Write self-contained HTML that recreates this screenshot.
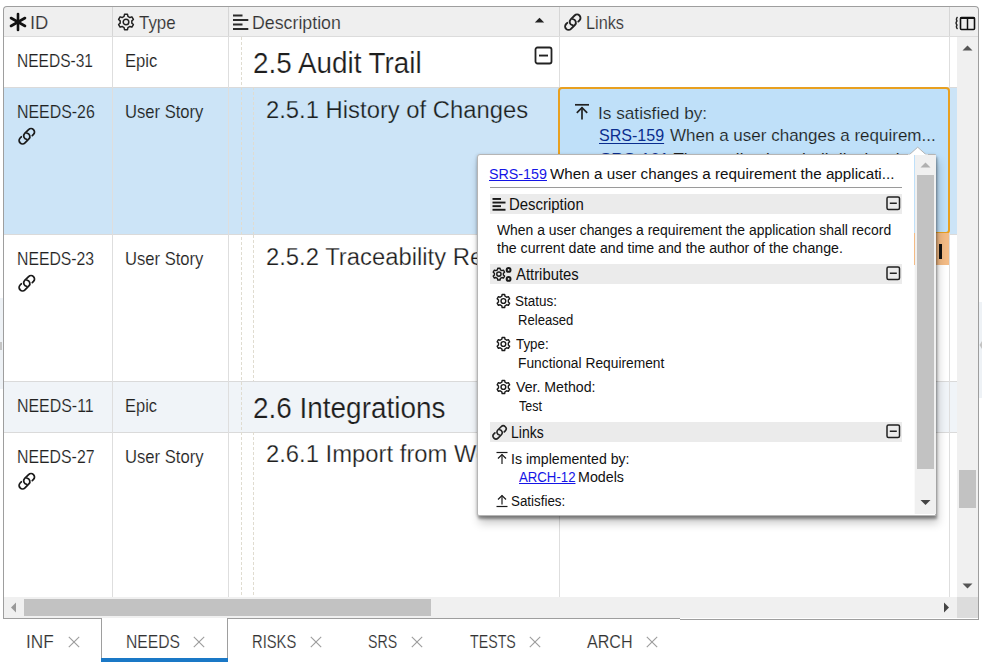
<!DOCTYPE html><html><head><meta charset="utf-8"><style>
html,body{margin:0;padding:0;width:982px;height:665px;overflow:hidden;background:#fff;font-family:"Liberation Sans", sans-serif;position:relative}
.t{position:absolute;white-space:nowrap;font-family:"Liberation Sans", sans-serif}
.dots{background-color:#efefef;background-image:radial-gradient(circle at 1px 1px,#e2e2dc 0.6px,transparent 0.9px);background-size:7px 7px}

</style></head><body>
<div style="position:absolute;left:4px;top:7px;width:974px;height:29px;background:#efefef;border-top-left-radius:3px;border-top-right-radius:3px"></div>
<div style="position:absolute;left:4px;top:36px;width:974px;height:1px;background:#dcdcdc"></div>
<div style="position:absolute;left:4px;top:37px;width:953px;height:50px;background:#ffffff"></div>
<div style="position:absolute;left:4px;top:87px;width:953px;height:148px;background:#cce4f7"></div>
<div style="position:absolute;left:4px;top:235px;width:953px;height:146px;background:#ffffff"></div>
<div style="position:absolute;left:4px;top:381px;width:953px;height:51px;background:#f0f4f8"></div>
<div style="position:absolute;left:4px;top:432px;width:953px;height:165px;background:#ffffff"></div>
<div style="position:absolute;left:4px;top:87px;width:953px;height:1px;background:#dadada"></div>
<div style="position:absolute;left:4px;top:234px;width:953px;height:1px;background:#dadada"></div>
<div style="position:absolute;left:4px;top:381px;width:953px;height:1px;background:#dadada"></div>
<div style="position:absolute;left:4px;top:432px;width:953px;height:1px;background:#dadada"></div>
<div style="position:absolute;left:112px;top:7px;width:1px;height:29px;background:#d6d6d6"></div>
<div style="position:absolute;left:112px;top:37px;width:1px;height:560px;background:#dedede"></div>
<div style="position:absolute;left:228px;top:7px;width:1px;height:29px;background:#d6d6d6"></div>
<div style="position:absolute;left:228px;top:37px;width:1px;height:560px;background:#dedede"></div>
<div style="position:absolute;left:559px;top:7px;width:1px;height:29px;background:#d6d6d6"></div>
<div style="position:absolute;left:559px;top:37px;width:1px;height:560px;background:#dedede"></div>
<div style="position:absolute;left:949px;top:7px;width:1px;height:29px;background:#d6d6d6"></div>
<div style="position:absolute;left:949px;top:37px;width:1px;height:560px;background:#dedede"></div>
<div style="position:absolute;left:241px;top:37px;width:1px;height:560px;background-image:linear-gradient(#e0dcd0 60%,transparent 60%);background-size:1px 5px"></div>
<div style="position:absolute;left:253px;top:87px;width:1px;height:147px;background-image:linear-gradient(#e0dcd0 60%,transparent 60%);background-size:1px 5px"></div>
<div style="position:absolute;left:253px;top:235px;width:1px;height:146px;background-image:linear-gradient(#e0dcd0 60%,transparent 60%);background-size:1px 5px"></div>
<div style="position:absolute;left:253px;top:432px;width:1px;height:165px;background-image:linear-gradient(#e0dcd0 60%,transparent 60%);background-size:1px 5px"></div>
<svg style="position:absolute;left:8px;top:12px;" width="20" height="20" viewBox="0 0 20 20"><g stroke="#111" stroke-width="2.6" stroke-linecap="round"><line x1="10" y1="2" x2="10" y2="18"/><line x1="3" y1="6" x2="17" y2="14"/><line x1="3" y1="14" x2="17" y2="6"/></g></svg>
<div class="t" style="left:30.25px;top:15px;font-size:17.83px;line-height:17.83px;color:#333;transform:scaleX(1.0327);transform-origin:0 0;;-webkit-text-stroke:0.15px #efefef">ID</div>
<svg style="position:absolute;left:116px;top:12px;" width="20" height="20" viewBox="0 0 20 20"><path d="M8.07,4.39 L8.51,2.34 L11.49,2.34 L11.93,4.39 L13.89,5.53 L15.89,4.88 L17.38,7.46 L15.82,8.87 L15.82,11.13 L17.38,12.54 L15.89,15.12 L13.89,14.47 L11.93,15.61 L11.49,17.66 L8.51,17.66 L8.07,15.61 L6.11,14.47 L4.11,15.12 L2.62,12.54 L4.18,11.13 L4.18,8.87 L2.62,7.46 L4.11,4.88 L6.11,5.53Z" fill="none" stroke="#222" stroke-width="1.5" stroke-linejoin="round"/><circle cx="10" cy="10" r="2.81" fill="none" stroke="#222" stroke-width="1.5"/></svg>
<div class="t" style="left:138.90px;top:15px;font-size:17.83px;line-height:17.83px;color:#333;transform:scaleX(0.9470);transform-origin:0 0;;-webkit-text-stroke:0.15px #efefef">Type</div>
<svg style="position:absolute;left:232px;top:13px;" width="18" height="18" viewBox="0 0 18 18"><g fill="#2a2a2a"><rect x="1" y="1.5" width="9.5" height="2"/><rect x="1" y="6" width="15.3" height="2"/><rect x="1" y="10.5" width="9.5" height="2"/><rect x="1" y="15" width="15.3" height="2"/></g></svg>
<div class="t" style="left:251.80px;top:15px;font-size:17.83px;line-height:17.83px;color:#333;transform:scaleX(0.9967);transform-origin:0 0;;-webkit-text-stroke:0.15px #efefef">Description</div>
<svg style="position:absolute;left:534px;top:17px;" width="11" height="6" viewBox="0 0 11 6"><path d="M0.8,5.5 L5.5,0.8 L10.2,5.5Z" fill="#222"/></svg>
<svg style="position:absolute;left:564px;top:13px;" width="18" height="18" viewBox="0 0 18 18"><g transform="translate(8.8 9.2) scale(1.0) rotate(-45)" fill="none" stroke="#222" stroke-width="1.90" stroke-linecap="round"><path d="M-4.3,-3.45 L-6.0,-3.45 A3.45,3.45 0 0 0 -6.0,3.45 L-0.5,3.45 A3.45,3.45 0 0 0 2.25,-2.08"/><path d="M4.3,3.45 L6.0,3.45 A3.45,3.45 0 0 0 6.0,-3.45 L0.5,-3.45 A3.45,3.45 0 0 0 -2.25,2.08"/></g></svg>
<div class="t" style="left:586.00px;top:15px;font-size:17.83px;line-height:17.83px;color:#333;transform:scaleX(0.9126);transform-origin:0 0;;-webkit-text-stroke:0.15px #efefef">Links</div>
<svg style="position:absolute;left:953px;top:14px;" width="24" height="18" viewBox="0 0 24 18"><path d="M4.5,3 Q2.5,5 4,7 Q2,9 4,11 Q2.5,13 4.5,15" fill="none" stroke="#222" stroke-width="1.3"/><rect x="7.5" y="3.5" width="14" height="12" rx="1" fill="none" stroke="#111" stroke-width="1.6"/><rect x="7.5" y="3" width="14" height="2" fill="#111"/><line x1="14.5" y1="4" x2="14.5" y2="15" stroke="#111" stroke-width="1.5"/></svg>
<div class="t" style="left:17.40px;top:53px;font-size:17.97px;line-height:17.97px;color:#222;transform:scaleX(0.8652);transform-origin:0 0;;-webkit-text-stroke:0.15px #ffffff">NEEDS-31</div>
<div class="t" style="left:125.10px;top:53px;font-size:17.97px;line-height:17.97px;color:#222;transform:scaleX(0.9276);transform-origin:0 0;;-webkit-text-stroke:0.15px #ffffff">Epic</div>
<div class="t" style="left:253.40px;top:49px;font-size:28.99px;line-height:28.99px;color:#1e1e1e;transform:scaleX(0.9607);transform-origin:0 0;-webkit-text-stroke:0.2px #ffffff">2.5 Audit Trail</div>
<svg style="position:absolute;left:534px;top:46px;" width="20" height="20" viewBox="0 0 20 20"><rect x="1.5" y="1.5" width="16" height="16" rx="2" fill="none" stroke="#222" stroke-width="1.8"/><rect x="5" y="8.6" width="9" height="1.9" fill="#222"/></svg>
<div class="t" style="left:17.30px;top:104px;font-size:17.97px;line-height:17.97px;color:#222;transform:scaleX(0.8861);transform-origin:0 0;;-webkit-text-stroke:0.15px #cce4f7">NEEDS-26</div>
<svg style="position:absolute;left:17.5px;top:127px;" width="18" height="18" viewBox="0 0 18 18"><g transform="translate(8.8 9.2) scale(1.0) rotate(-45)" fill="none" stroke="#1a1a1a" stroke-width="1.75" stroke-linecap="round"><path d="M-4.3,-3.45 L-6.0,-3.45 A3.45,3.45 0 0 0 -6.0,3.45 L-0.5,3.45 A3.45,3.45 0 0 0 2.25,-2.08"/><path d="M4.3,3.45 L6.0,3.45 A3.45,3.45 0 0 0 6.0,-3.45 L0.5,-3.45 A3.45,3.45 0 0 0 -2.25,2.08"/></g></svg>
<div class="t" style="left:125.30px;top:104px;font-size:17.97px;line-height:17.97px;color:#222;transform:scaleX(0.9248);transform-origin:0 0;;-webkit-text-stroke:0.15px #cce4f7">User Story</div>
<div class="t" style="left:266.35px;top:98px;font-size:24.35px;line-height:24.35px;color:#1e1e1e;transform:scaleX(0.9788);transform-origin:0 0;-webkit-text-stroke:0.25px #cce4f7">2.5.1 History of Changes</div>
<div class="t" style="left:17.40px;top:251px;font-size:17.97px;line-height:17.97px;color:#222;transform:scaleX(0.8785);transform-origin:0 0;;-webkit-text-stroke:0.15px #ffffff">NEEDS-23</div>
<svg style="position:absolute;left:17.5px;top:274px;" width="18" height="18" viewBox="0 0 18 18"><g transform="translate(8.8 9.2) scale(1.0) rotate(-45)" fill="none" stroke="#1a1a1a" stroke-width="1.75" stroke-linecap="round"><path d="M-4.3,-3.45 L-6.0,-3.45 A3.45,3.45 0 0 0 -6.0,3.45 L-0.5,3.45 A3.45,3.45 0 0 0 2.25,-2.08"/><path d="M4.3,3.45 L6.0,3.45 A3.45,3.45 0 0 0 6.0,-3.45 L0.5,-3.45 A3.45,3.45 0 0 0 -2.25,2.08"/></g></svg>
<div class="t" style="left:125.30px;top:251px;font-size:17.97px;line-height:17.97px;color:#222;transform:scaleX(0.9248);transform-origin:0 0;;-webkit-text-stroke:0.15px #ffffff">User Story</div>
<div class="t" style="left:266.30px;top:245px;font-size:24.35px;line-height:24.35px;color:#1e1e1e;transform:scaleX(0.9788);transform-origin:0 0;-webkit-text-stroke:0.25px #ffffff">2.5.2 Traceability Requirements</div>
<div class="t" style="left:17.30px;top:398px;font-size:17.97px;line-height:17.97px;color:#222;transform:scaleX(0.8864);transform-origin:0 0;;-webkit-text-stroke:0.15px #f0f4f8">NEEDS-11</div>
<div class="t" style="left:125.15px;top:398px;font-size:17.97px;line-height:17.97px;color:#222;transform:scaleX(0.9173);transform-origin:0 0;;-webkit-text-stroke:0.15px #f0f4f8">Epic</div>
<div class="t" style="left:253.20px;top:394px;font-size:28.99px;line-height:28.99px;color:#1e1e1e;transform:scaleX(0.9630);transform-origin:0 0;-webkit-text-stroke:0.2px #f0f4f8">2.6 Integrations</div>
<div class="t" style="left:17.25px;top:449px;font-size:17.97px;line-height:17.97px;color:#222;transform:scaleX(0.8831);transform-origin:0 0;;-webkit-text-stroke:0.15px #ffffff">NEEDS-27</div>
<svg style="position:absolute;left:17.5px;top:472px;" width="18" height="18" viewBox="0 0 18 18"><g transform="translate(8.8 9.2) scale(1.0) rotate(-45)" fill="none" stroke="#1a1a1a" stroke-width="1.75" stroke-linecap="round"><path d="M-4.3,-3.45 L-6.0,-3.45 A3.45,3.45 0 0 0 -6.0,3.45 L-0.5,3.45 A3.45,3.45 0 0 0 2.25,-2.08"/><path d="M4.3,3.45 L6.0,3.45 A3.45,3.45 0 0 0 6.0,-3.45 L0.5,-3.45 A3.45,3.45 0 0 0 -2.25,2.08"/></g></svg>
<div class="t" style="left:125.30px;top:449px;font-size:17.97px;line-height:17.97px;color:#222;transform:scaleX(0.9260);transform-origin:0 0;;-webkit-text-stroke:0.15px #ffffff">User Story</div>
<div class="t" style="left:266.30px;top:442px;font-size:24.35px;line-height:24.35px;color:#1e1e1e;transform:scaleX(0.9788);transform-origin:0 0;-webkit-text-stroke:0.25px #ffffff">2.6.1 Import from Word</div>
<div style="position:absolute;left:558px;top:87px;width:388px;height:143px;border:2px solid #e8a020;border-radius:4px;background:#bfe0f9"></div>
<svg style="position:absolute;left:573px;top:103px;" width="18" height="18" viewBox="0 0 18 18"><g fill="none" stroke="#222" stroke-width="1.7"><line x1="2" y1="1.8" x2="16" y2="1.8"/><line x1="9" y1="4.5" x2="9" y2="16.5"/><path d="M3.8,9.8 L9,4.6 L14.2,9.8"/></g></svg>
<div class="t" style="left:598.35px;top:105px;font-size:17.39px;line-height:17.39px;color:#1e1e1e;transform:scaleX(0.9912);transform-origin:0 0;;-webkit-text-stroke:0.15px #bfe0f9">Is satisfied by:</div>
<div class="t" style="left:599.35px;top:127px;font-size:17.39px;line-height:17.39px;color:#0a2d8f;transform:scaleX(0.9233);transform-origin:0 0;"><span style="text-decoration:underline;text-underline-offset:2px">SRS-159</span></div>
<div class="t" style="left:670.20px;top:127px;font-size:17.39px;line-height:17.39px;color:#1e1e1e;transform:scaleX(0.9790);transform-origin:0 0;;-webkit-text-stroke:0.15px #bfe0f9">When a user changes a requirem...</div>
<div class="t" style="left:599.90px;top:151px;font-size:17.39px;line-height:17.39px;color:#1e1e1e;transform:scaleX(0.9790);transform-origin:0 0;width:340px;overflow:hidden"><span style="color:#0a2d8f;text-decoration:underline;text-underline-offset:2px;-webkit-text-stroke:0">SRS-161</span> The application shall display the a...</div>
<div style="position:absolute;left:559px;top:233px;width:390px;height:32px;background:#f3bb85"></div>
<div style="position:absolute;left:939px;top:244px;width:3px;height:15px;background:#111"></div>
<div style="position:absolute;left:957px;top:37px;width:21px;height:560px;background:#f0f0f0"></div>
<svg style="position:absolute;left:957px;top:40px;" width="21" height="14" viewBox="0 0 21 14"><path d="M5.5,10.5 L10.5,5.5 L15.5,10.5Z" fill="#555"/></svg>
<div style="position:absolute;left:959px;top:470px;width:17px;height:38px;background:#c2c2c2"></div>
<svg style="position:absolute;left:957px;top:580px;" width="21" height="14" viewBox="0 0 21 14"><path d="M5.5,3.5 L10.5,8.5 L15.5,3.5Z" fill="#555"/></svg>
<div style="position:absolute;left:4px;top:597px;width:953px;height:21px;background:#f0f0f0"></div>
<svg style="position:absolute;left:4px;top:597px;" width="20" height="21" viewBox="0 0 20 21"><path d="M12,5.5 L7,10.5 L12,15.5Z" fill="#999"/></svg>
<div style="position:absolute;left:24px;top:599px;width:407px;height:17px;background:#c2c2c2"></div>
<svg style="position:absolute;left:936px;top:597px;" width="20" height="21" viewBox="0 0 20 21"><path d="M8,5.5 L13,10.5 L8,15.5Z" fill="#444"/></svg>
<div style="position:absolute;left:957px;top:597px;width:21px;height:21px;background:#dcdcdc"></div>
<div style="position:absolute;left:0px;top:298px;width:3px;height:91px;background:#eef2f6"></div>
<div style="position:absolute;left:0px;top:342px;width:2px;height:8px;background:#c4c4c4"></div>
<div style="position:absolute;left:979px;top:302px;width:3px;height:96px;background:#eef2f6"></div>
<svg style="position:absolute;left:979px;top:340px;" width="3" height="10" viewBox="0 0 3 10"><path d="M3,1 L0.5,5 L3,9Z" fill="#c4c4c4"/></svg>
<div style="position:absolute;left:3px;top:6px;width:974px;height:612px;border:1px solid #9e9e9e;border-bottom:none;border-radius:4px 4px 0 0;pointer-events:none"></div>
<div style="position:absolute;left:3px;top:618px;width:98px;height:1px;background:#9e9e9e"></div>
<div style="position:absolute;left:228px;top:618px;width:452px;height:1px;background:#9e9e9e"></div>
<div style="position:absolute;left:680px;top:619px;width:299px;height:1px;background:#9e9e9e"></div>
<div style="position:absolute;left:978px;top:618px;width:1px;height:2px;background:#9e9e9e"></div>
<div style="position:absolute;left:102px;top:618px;width:125px;height:44px;background:#fff"></div>
<div style="position:absolute;left:101px;top:618px;width:1px;height:40px;background:#9e9e9e"></div>
<div style="position:absolute;left:227px;top:618px;width:1px;height:40px;background:#9e9e9e"></div>
<div style="position:absolute;left:101px;top:658px;width:127px;height:4px;background:#1a78c6"></div>
<div class="t" style="left:26.05px;top:634px;font-size:17.97px;line-height:17.97px;color:#333;transform:scaleX(0.9586);transform-origin:0 0;;-webkit-text-stroke:0.15px #ffffff">INF</div>
<svg style="position:absolute;left:67.5px;top:636px;" width="12" height="12" viewBox="0 0 12 12"><g stroke="#9c9c9c" stroke-width="1.1"><line x1="0.8" y1="0.8" x2="11.2" y2="11.2"/><line x1="11.2" y1="0.8" x2="0.8" y2="11.2"/></g></svg>
<div class="t" style="left:126.30px;top:634px;font-size:17.97px;line-height:17.97px;color:#333;transform:scaleX(0.8742);transform-origin:0 0;;-webkit-text-stroke:0.15px #ffffff">NEEDS</div>
<svg style="position:absolute;left:192.5px;top:636px;" width="12" height="12" viewBox="0 0 12 12"><g stroke="#9c9c9c" stroke-width="1.1"><line x1="0.8" y1="0.8" x2="11.2" y2="11.2"/><line x1="11.2" y1="0.8" x2="0.8" y2="11.2"/></g></svg>
<div class="t" style="left:252.35px;top:634px;font-size:17.97px;line-height:17.97px;color:#333;transform:scaleX(0.8214);transform-origin:0 0;;-webkit-text-stroke:0.15px #ffffff">RISKS</div>
<svg style="position:absolute;left:309.5px;top:636px;" width="12" height="12" viewBox="0 0 12 12"><g stroke="#9c9c9c" stroke-width="1.1"><line x1="0.8" y1="0.8" x2="11.2" y2="11.2"/><line x1="11.2" y1="0.8" x2="0.8" y2="11.2"/></g></svg>
<div class="t" style="left:368.30px;top:634px;font-size:17.97px;line-height:17.97px;color:#333;transform:scaleX(0.7905);transform-origin:0 0;;-webkit-text-stroke:0.15px #ffffff">SRS</div>
<svg style="position:absolute;left:411.2px;top:636px;" width="12" height="12" viewBox="0 0 12 12"><g stroke="#9c9c9c" stroke-width="1.1"><line x1="0.8" y1="0.8" x2="11.2" y2="11.2"/><line x1="11.2" y1="0.8" x2="0.8" y2="11.2"/></g></svg>
<div class="t" style="left:469.80px;top:634px;font-size:17.97px;line-height:17.97px;color:#333;transform:scaleX(0.7927);transform-origin:0 0;;-webkit-text-stroke:0.15px #ffffff">TESTS</div>
<svg style="position:absolute;left:528.7px;top:636px;" width="12" height="12" viewBox="0 0 12 12"><g stroke="#9c9c9c" stroke-width="1.1"><line x1="0.8" y1="0.8" x2="11.2" y2="11.2"/><line x1="11.2" y1="0.8" x2="0.8" y2="11.2"/></g></svg>
<div class="t" style="left:587.45px;top:634px;font-size:17.97px;line-height:17.97px;color:#333;transform:scaleX(0.8971);transform-origin:0 0;;-webkit-text-stroke:0.15px #ffffff">ARCH</div>
<svg style="position:absolute;left:645.5px;top:636px;" width="12" height="12" viewBox="0 0 12 12"><g stroke="#9c9c9c" stroke-width="1.1"><line x1="0.8" y1="0.8" x2="11.2" y2="11.2"/><line x1="11.2" y1="0.8" x2="0.8" y2="11.2"/></g></svg>
<div style="position:absolute;left:477px;top:154px;width:459px;height:362px;background:#fff;border:1px solid #b5b5b5;border-radius:3px 0 0 2px;box-sizing:border-box;box-shadow:1px 3px 3px rgba(0,0,0,0.38), 2px 7px 10px rgba(0,0,0,0.22), -1px 0 3px rgba(0,0,0,0.1)"></div>
<svg style="position:absolute;left:908px;top:146px;" width="20" height="10" viewBox="0 0 20 10"><path d="M1,9 L9.7,1.2 L18.4,9" fill="#fff" stroke="#b5b5b5" stroke-width="1"/><rect x="0" y="8.5" width="20" height="2" fill="#fff"/></svg>
<div class="t" style="left:489.10px;top:166px;font-size:15.22px;line-height:15.22px;color:#1515e6;transform:scaleX(0.9385);transform-origin:0 0;"><span style="text-decoration:underline">SRS-159</span></div>
<div class="t" style="left:550.35px;top:166px;font-size:15.22px;line-height:15.22px;color:#111;transform:scaleX(1.0004);transform-origin:0 0;">When a user changes a requirement the applicati...</div>
<div style="position:absolute;left:490px;top:187px;width:412px;height:1px;background:#9a9a9a"></div>
<div style="position:absolute;left:490px;top:194px;width:412px;height:20px;background:#ebebeb"></div>
<svg style="position:absolute;left:491px;top:197px;" width="16" height="14" viewBox="0 0 16 14"><g fill="#1a1a1a"><rect x="1.5" y="1" width="8.5" height="1.9"/><rect x="1.5" y="4.6" width="13" height="1.9"/><rect x="1.5" y="8.2" width="8.5" height="1.9"/><rect x="1.5" y="11.8" width="13" height="1.9"/></g></svg>
<div class="t" style="left:509.20px;top:197px;font-size:15.65px;line-height:15.65px;color:#111;transform:scaleX(0.9546);transform-origin:0 0;">Description</div>
<svg style="position:absolute;left:886px;top:196px;" width="15" height="15" viewBox="0 0 15 15"><rect x="1" y="1" width="12.5" height="12.5" rx="1.5" fill="none" stroke="#222" stroke-width="1.5"/><rect x="3.8" y="6.5" width="7" height="1.5" fill="#222"/></svg>
<div class="t" style="left:497.00px;top:224px;font-size:13.77px;line-height:13.77px;color:#111;transform:scaleX(1.0100);transform-origin:0 0;">When a user changes a requirement the application shall record</div>
<div class="t" style="left:497.00px;top:242px;font-size:13.77px;line-height:13.77px;color:#111;transform:scaleX(1.0271);transform-origin:0 0;">the current date and time and the author of the change.</div>
<div style="position:absolute;left:490px;top:264px;width:412px;height:20px;background:#ebebeb"></div>
<svg style="position:absolute;left:491px;top:266px;" width="22" height="16" viewBox="0 0 22 16"><path d="M6.42,3.79 L6.76,2.21 L9.04,2.21 L9.38,3.79 L10.89,4.66 L12.43,4.16 L13.57,6.15 L12.38,7.23 L12.38,8.97 L13.57,10.05 L12.43,12.04 L10.89,11.54 L9.38,12.41 L9.04,13.99 L6.76,13.99 L6.42,12.41 L4.91,11.54 L3.37,12.04 L2.23,10.05 L3.42,8.97 L3.42,7.23 L2.23,6.15 L3.37,4.16 L4.91,4.66Z" fill="none" stroke="#1a1a1a" stroke-width="1.4" stroke-linejoin="round"/><circle cx="7.9" cy="8.1" r="2.16" fill="none" stroke="#1a1a1a" stroke-width="1.4"/><g fill="none" stroke="#1a1a1a"><circle cx="17.6" cy="3.9" r="1.9" stroke-width="2.0"/><circle cx="17.6" cy="12.9" r="1.9" stroke-width="2.0"/></g></svg>
<div class="t" style="left:516.05px;top:267px;font-size:15.65px;line-height:15.65px;color:#111;transform:scaleX(0.9501);transform-origin:0 0;">Attributes</div>
<svg style="position:absolute;left:886px;top:266px;" width="15" height="15" viewBox="0 0 15 15"><rect x="1" y="1" width="12.5" height="12.5" rx="1.5" fill="none" stroke="#222" stroke-width="1.5"/><rect x="3.8" y="6.5" width="7" height="1.5" fill="#222"/></svg>
<svg style="position:absolute;left:495px;top:293.3px;" width="16" height="16" viewBox="0 0 16 16"><path d="M6.77,3.26 L7.14,1.52 L9.66,1.52 L10.03,3.26 L11.69,4.21 L13.38,3.67 L14.64,5.85 L13.32,7.04 L13.32,8.96 L14.64,10.15 L13.38,12.33 L11.69,11.79 L10.03,12.74 L9.66,14.48 L7.14,14.48 L6.77,12.74 L5.11,11.79 L3.42,12.33 L2.16,10.15 L3.48,8.96 L3.48,7.04 L2.16,5.85 L3.42,3.67 L5.11,4.21Z" fill="none" stroke="#1a1a1a" stroke-width="1.4" stroke-linejoin="round"/><circle cx="8.4" cy="8.0" r="2.38" fill="none" stroke="#1a1a1a" stroke-width="1.4"/></svg>
<div class="t" style="left:515.00px;top:294px;font-size:14.64px;line-height:14.64px;color:#111;transform:scaleX(0.9211);transform-origin:0 0;">Status:</div>
<div class="t" style="left:518.35px;top:313px;font-size:14.64px;line-height:14.64px;color:#111;transform:scaleX(0.8943);transform-origin:0 0;">Released</div>
<svg style="position:absolute;left:495px;top:336.0px;" width="16" height="16" viewBox="0 0 16 16"><path d="M6.77,3.26 L7.14,1.52 L9.66,1.52 L10.03,3.26 L11.69,4.21 L13.38,3.67 L14.64,5.85 L13.32,7.04 L13.32,8.96 L14.64,10.15 L13.38,12.33 L11.69,11.79 L10.03,12.74 L9.66,14.48 L7.14,14.48 L6.77,12.74 L5.11,11.79 L3.42,12.33 L2.16,10.15 L3.48,8.96 L3.48,7.04 L2.16,5.85 L3.42,3.67 L5.11,4.21Z" fill="none" stroke="#1a1a1a" stroke-width="1.4" stroke-linejoin="round"/><circle cx="8.4" cy="8.0" r="2.38" fill="none" stroke="#1a1a1a" stroke-width="1.4"/></svg>
<div class="t" style="left:516.00px;top:337px;font-size:14.64px;line-height:14.64px;color:#111;transform:scaleX(0.9143);transform-origin:0 0;">Type:</div>
<div class="t" style="left:518.35px;top:356px;font-size:14.64px;line-height:14.64px;color:#111;transform:scaleX(0.9426);transform-origin:0 0;">Functional Requirement</div>
<svg style="position:absolute;left:495px;top:378.7px;" width="16" height="16" viewBox="0 0 16 16"><path d="M6.77,3.26 L7.14,1.52 L9.66,1.52 L10.03,3.26 L11.69,4.21 L13.38,3.67 L14.64,5.85 L13.32,7.04 L13.32,8.96 L14.64,10.15 L13.38,12.33 L11.69,11.79 L10.03,12.74 L9.66,14.48 L7.14,14.48 L6.77,12.74 L5.11,11.79 L3.42,12.33 L2.16,10.15 L3.48,8.96 L3.48,7.04 L2.16,5.85 L3.42,3.67 L5.11,4.21Z" fill="none" stroke="#1a1a1a" stroke-width="1.4" stroke-linejoin="round"/><circle cx="8.4" cy="8.0" r="2.38" fill="none" stroke="#1a1a1a" stroke-width="1.4"/></svg>
<div class="t" style="left:516.00px;top:380px;font-size:14.64px;line-height:14.64px;color:#111;transform:scaleX(0.9674);transform-origin:0 0;">Ver. Method:</div>
<div class="t" style="left:519.35px;top:399px;font-size:14.64px;line-height:14.64px;color:#111;transform:scaleX(0.8543);transform-origin:0 0;">Test</div>
<div style="position:absolute;left:490px;top:422px;width:412px;height:20px;background:#ebebeb"></div>
<svg style="position:absolute;left:492px;top:424px;" width="17" height="17" viewBox="0 0 17 17"><g transform="translate(7.6 8.4) scale(0.85) rotate(-45)" fill="none" stroke="#222" stroke-width="1.88" stroke-linecap="round"><path d="M-4.3,-3.45 L-6.0,-3.45 A3.45,3.45 0 0 0 -6.0,3.45 L-0.5,3.45 A3.45,3.45 0 0 0 2.25,-2.08"/><path d="M4.3,3.45 L6.0,3.45 A3.45,3.45 0 0 0 6.0,-3.45 L0.5,-3.45 A3.45,3.45 0 0 0 -2.25,2.08"/></g></svg>
<div class="t" style="left:511.00px;top:425px;font-size:15.65px;line-height:15.65px;color:#111;transform:scaleX(0.8948);transform-origin:0 0;">Links</div>
<svg style="position:absolute;left:886px;top:424px;" width="15" height="15" viewBox="0 0 15 15"><rect x="1" y="1" width="12.5" height="12.5" rx="1.5" fill="none" stroke="#222" stroke-width="1.5"/><rect x="3.8" y="6.5" width="7" height="1.5" fill="#222"/></svg>
<svg style="position:absolute;left:495px;top:451px;" width="14" height="14" viewBox="0 0 14 14"><g fill="none" stroke="#1a1a1a" stroke-width="1.2"><line x1="1.5" y1="1.5" x2="12.5" y2="1.5"/><line x1="7" y1="3.5" x2="7" y2="13"/><path d="M3,7.5 L7,3.5 L11,7.5"/></g></svg>
<div class="t" style="left:511.25px;top:453px;font-size:13.91px;line-height:13.91px;color:#111;transform:scaleX(1.0154);transform-origin:0 0;">Is implemented by:</div>
<div class="t" style="left:519.10px;top:471px;font-size:13.91px;line-height:13.91px;color:#1515e6;transform:scaleX(0.9492);transform-origin:0 0;"><span style="text-decoration:underline">ARCH-12</span></div>
<div class="t" style="left:578.35px;top:471px;font-size:13.91px;line-height:13.91px;color:#111;transform:scaleX(1.0258);transform-origin:0 0;">Models</div>
<svg style="position:absolute;left:495px;top:494px;" width="14" height="14" viewBox="0 0 14 14"><g fill="none" stroke="#1a1a1a" stroke-width="1.2"><line x1="1.5" y1="12.5" x2="12.5" y2="12.5"/><line x1="7" y1="1.5" x2="7" y2="10.5"/><path d="M3,5.5 L7,1.5 L11,5.5"/></g></svg>
<div class="t" style="left:511.25px;top:495px;font-size:13.91px;line-height:13.91px;color:#111;transform:scaleX(0.9619);transform-origin:0 0;">Satisfies:</div>
<div style="position:absolute;left:914px;top:155px;width:1px;height:78px;background:#bfe0f9"></div>
<div style="position:absolute;left:914px;top:233px;width:1px;height:32px;background:#f3bb85"></div>
<div style="position:absolute;left:914px;top:265px;width:1px;height:249px;background:#fafafa"></div>
<div style="position:absolute;left:915px;top:155px;width:21px;height:359px;background:#f0f0f0"></div>
<svg style="position:absolute;left:915px;top:158px;" width="21" height="12" viewBox="0 0 21 12"><path d="M5.5,9.5 L10.5,4.5 L15.5,9.5Z" fill="#b0b0b0"/></svg>
<div style="position:absolute;left:917px;top:175px;width:17px;height:294px;background:#c2c2c2"></div>
<svg style="position:absolute;left:915px;top:497px;" width="21" height="12" viewBox="0 0 21 12"><path d="M5.5,3 L10.5,8 L15.5,3Z" fill="#444"/></svg>
</body></html>
